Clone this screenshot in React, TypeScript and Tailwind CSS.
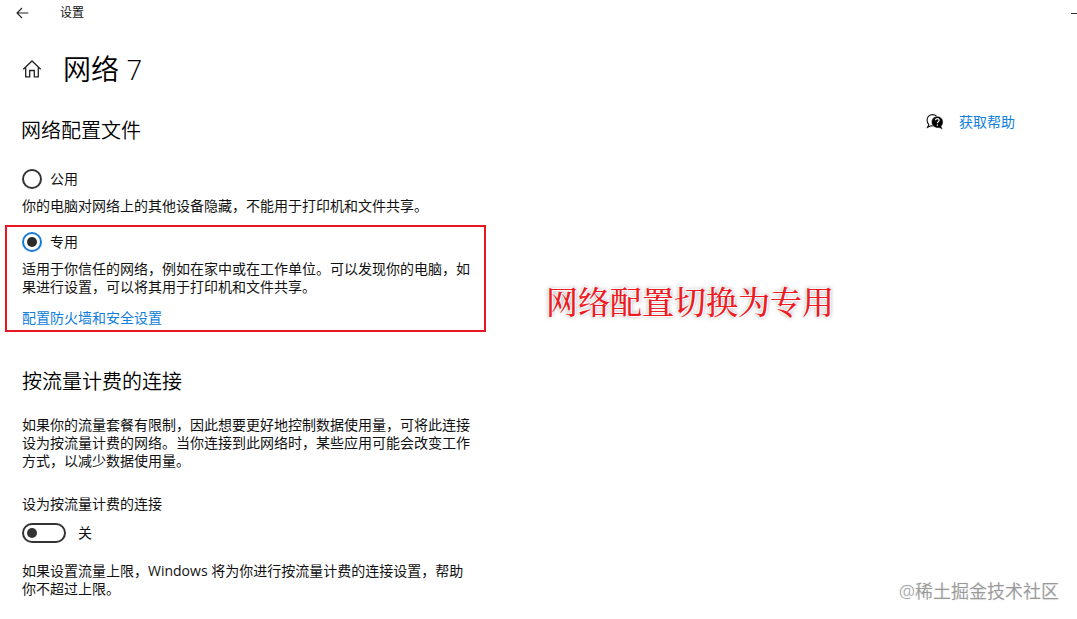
import { useState } from "react";

type Profile = "public" | "private";

const PROFILES: Array<{ value: Profile; label: string; description: string }> = [
  {
    value: "public",
    label: "公用",
    description: "你的电脑对网络上的其他设备隐藏，不能用于打印机和文件共享。",
  },
  {
    value: "private",
    label: "专用",
    description:
      "适用于你信任的网络，例如在家中或在工作单位。可以发现你的电脑，如果进行设置，可以将其用于打印机和文件共享。",
  },
];

function BackIcon() {
  return (
    <svg width="14" height="12" viewBox="0 0 14 12" fill="none" stroke="#222" strokeWidth="1.1">
      <path d="M12.300 6H1M6 1L1 6l5 5" />
    </svg>
  );
}

function HomeIcon() {
  return (
    <svg width="20" height="20" viewBox="0 0 20 20" fill="none" stroke="#222" strokeWidth="1.3">
      <path d="M1.3 10.2L10 2l8.700 8.200" />
      <path d="M3.700 8.500v9.300h4v-6.300h4.600v6.300h4V8.500" />
    </svg>
  );
}

function HelpIcon() {
  return (
    <svg width="18" height="18" viewBox="0 0 18 18" fill="none">
      <path
        d="M2.800 11.700L1.500 14.300l3.500-1.500c3.500.5 7-2 7-5.600C12 4 9.800 1.600 6.600 1.600S1.100 4 1.100 7.200c0 1.800.6 3.300 1.700 4.500z"
        stroke="#111"
        strokeWidth="1.1"
      />
      <path
        d="M11.200 3.300c3.400 0 5.900 2.500 5.900 5.700 0 1.800-.7 3.200-1.700 4.200l1.500 3.500-3.700-1.800c-4 .8-7.700-1.900-7.700-5.900 0-3.200 2.300-5.700 5.700-5.700z"
        fill="#000"
        stroke="#fff"
        strokeWidth=".5"
      />
      <path
        d="M9.500 7.300c.1-2.300 3.700-2.300 3.600-.1 0 1.400-1.700 1.500-1.700 3M11.400 11.500v1.200"
        stroke="#fff"
        strokeWidth="1.2"
      />
    </svg>
  );
}

function ProfileOption({
  option,
  checked,
  onSelect,
}: {
  option: (typeof PROFILES)[number];
  checked: boolean;
  onSelect: (value: Profile) => void;
}) {
  return (
    <div>
      <label className="flex w-fit items-center gap-2">
        <input
          type="radio"
          name="profile"
          value={option.value}
          checked={checked}
          onChange={() => onSelect(option.value)}
          className="grid size-5 appearance-none place-items-center rounded-full border-2 border-[#333] before:size-[10px] before:rounded-full checked:border-[#1a7ad9] checked:before:bg-[#2b2b2b]"
        />
        {option.label}
      </label>
      <p className="mt-2">{option.description}</p>
    </div>
  );
}

export default function App() {
  const [profile, setProfile] = useState<Profile>("private");
  const [metered, setMetered] = useState(false);

  return (
    <div className="relative min-h-screen overflow-hidden bg-white pb-5 font-['Open_Sans','Noto_Sans_CJK_SC',sans-serif] text-sm leading-[18px] text-[#111]">
      <header className="flex h-[26px] items-center justify-between pl-4">
        <div className="flex items-center gap-[30px]">
          <button type="button" aria-label="返回">
            <BackIcon />
          </button>
          <span className="text-xs">设置</span>
        </div>
        <button type="button" aria-label="最小化" className="flex h-6 w-[6px] items-center">
          <span className="h-px w-full bg-[#333]" />
        </button>
      </header>

      <div className="mt-[23px] flex items-center gap-[21px] pl-[22px]">
        <a href="#home" aria-label="主页">
          <HomeIcon />
        </a>
        <h1 className="text-[28px] leading-10 font-[350] text-black">网络 7</h1>
      </div>

      <div className="flex items-start justify-between pr-[62px]">
        <main className="w-[486px] pl-[5px]">
          <section>
            <h2 className="mt-7 pl-4 text-xl leading-7 font-[350] text-black">网络配置文件</h2>
            <div className="mt-6 pr-[14px] pl-[17px]">
              <ProfileOption
                option={PROFILES[0]}
                checked={profile === "public"}
                onSelect={setProfile}
              />
            </div>
            <div className="mt-[10px] border-2 border-[#e81623] pt-[5px] pr-3 pb-[3px] pl-[15px]">
              <ProfileOption
                option={PROFILES[1]}
                checked={profile === "private"}
                onSelect={setProfile}
              />
              <a href="#firewall" className="mt-[13px] block w-fit text-[#0f80dc]">
                配置防火墙和安全设置
              </a>
            </div>
          </section>

          <section className="mt-9 pr-[14px] pl-[17px]">
            <h2 className="text-xl leading-7 font-[350] text-black">按流量计费的连接</h2>
            <p className="mt-5">
              如果你的流量套餐有限制，因此想要更好地控制数据使用量，可将此连接设为按流量计费的网络。当你连接到此网络时，某些应用可能会改变工作方式，以减少数据使用量。
            </p>
            <label htmlFor="metered" className="mt-[25px] block">
              设为按流量计费的连接
            </label>
            <div className="mt-[10px] flex items-center gap-3">
              <input
                id="metered"
                type="checkbox"
                role="switch"
                checked={metered}
                onChange={(e) => setMetered(e.target.checked)}
                className="flex h-5 w-11 appearance-none items-center rounded-full border-2 border-[#333] px-[3px] before:size-[10px] before:rounded-full before:bg-[#333] checked:justify-end checked:border-[#0078d7] checked:bg-[#0078d7] checked:before:bg-white"
              />
              <span>{metered ? "开" : "关"}</span>
            </div>
            <p className="mt-[19px]">
              如果设置流量上限，Windows 将为你进行按流量计费的连接设置，帮助你不超过上限。
            </p>
          </section>
        </main>

        <aside className="mt-6">
          <a href="#help" className="flex items-center gap-[15px] text-[#0f80dc]">
            <HelpIcon />
            获取帮助
          </a>
        </aside>
      </div>

      {/* callout laid over the page */}
      <p className="absolute top-[280px] left-[546px] font-['Noto_Serif_CJK_SC','Noto_Sans_CJK_SC',serif] text-[32px] leading-10 font-medium text-[#ed1c24] [text-shadow:0_0_2px_#fff,1px_1px_1px_#fff,-1px_-1px_1px_#fff,0_0_4px_#777]">
        网络配置切换为专用
      </p>

      <p className="absolute right-[18px] bottom-4 text-lg leading-6 font-[350] text-[#999] [text-shadow:0_0_2px_#ddd]">
        @稀土掘金技术社区
      </p>
    </div>
  );
}
